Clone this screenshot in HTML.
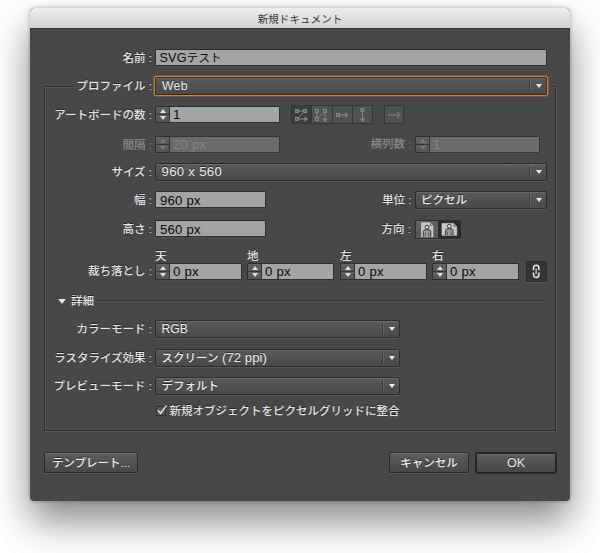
<!DOCTYPE html>
<html lang="ja">
<head>
<meta charset="utf-8">
<title>新規ドキュメント</title>
<style>
html,body{margin:0;padding:0;background:#fff;}
body{width:600px;height:553px;overflow:hidden;position:relative;font-family:"Liberation Sans","Noto Sans CJK JP",sans-serif;font-size:12.2px;color:#e4e4e4;}
.j{font-size:11.5px;font-weight:500;}
#dlg{position:absolute;left:30px;top:8px;width:540px;height:493px;background:#484848;border-radius:5px 5px 4px 4px;box-shadow:0 20px 38px rgba(0,0,0,.47),0 0 4px rgba(0,0,0,.3);}
#title{position:absolute;left:0;top:0;width:540px;height:21px;border-radius:5px 5px 0 0;background:linear-gradient(#eeeeee,#d2d2d2);border-bottom:1px solid #363636;box-sizing:border-box;color:#3a3a3a;text-align:center;line-height:23px;font-size:10.6px;}
.abs{position:absolute;}
.lbl{position:absolute;text-align:right;white-space:nowrap;line-height:16px;height:16px;font-size:11.5px;font-weight:500;text-shadow:0 -1px 0 rgba(0,0,0,.5);}
.dis{color:#8b8b8b;text-shadow:none;}
.fld{position:absolute;box-sizing:border-box;background:#a4a4a4;border:1px solid #303030;border-top-color:#2a2a2a;color:#0a0a0a;font-size:13.2px;letter-spacing:.2px;line-height:15px;padding-left:4px;white-space:nowrap;border-radius:1.5px;box-shadow:0 1px 0 rgba(255,255,255,.03);}
.fld.d{background:#6a6a6a;color:#838383;border-color:#343434;}
.dd{position:absolute;box-sizing:border-box;border:1px solid #2c2c2c;background:linear-gradient(#5a5a5a,#494949);border-radius:2px;color:#ececec;line-height:16px;padding-left:5.5px;white-space:nowrap;box-shadow:0 1px 0 rgba(255,255,255,.09), inset 0 1px 0 rgba(255,255,255,.10);text-shadow:0 -1px 0 rgba(0,0,0,.5);}
.dd i{position:absolute;right:16px;top:2px;bottom:2px;width:1px;background:#3a3a3a;box-shadow:1px 0 0 rgba(255,255,255,.10);}
.dd b{position:absolute;right:4px;top:6px;width:0;height:0;border-left:3.5px solid transparent;border-right:3.5px solid transparent;border-top:4px solid #eaeaea;}
.spin{position:absolute;box-sizing:border-box;width:15px;border:1px solid #303030;border-right:none;background:linear-gradient(#626262 0,#595959 46%,#363636 46%,#363636 54%,#5e5e5e 54%,#545454 100%);border-radius:1.5px 0 0 1.5px;box-shadow:0 1px 0 rgba(255,255,255,.03);}
.spin:before{content:"";position:absolute;left:4px;top:2px;border-left:3px solid transparent;border-right:3px solid transparent;border-bottom:4px solid #dedede;}
.spin:after{content:"";position:absolute;left:4px;bottom:2px;border-left:3px solid transparent;border-right:3px solid transparent;border-top:4px solid #dedede;}
.spin.d:before{border-bottom-color:#787878}.spin.d:after{border-top-color:#787878}
.btn{position:absolute;box-sizing:border-box;border:1px solid #2a2a2a;background:linear-gradient(#5d5d5d,#474747);border-radius:2px;color:#ececec;text-align:center;line-height:19px;padding-top:1px;box-shadow:0 1px 0 rgba(255,255,255,.09), inset 0 1px 0 rgba(255,255,255,.12);text-shadow:0 -1px 0 rgba(0,0,0,.5);}
.ln{position:absolute;background:#2f2f2f;}
.ib{position:absolute;box-sizing:border-box;top:105px;height:19px;border:1px solid #363636;background:#525252;}
svg{position:absolute;left:0;top:0;overflow:visible}
</style>
</head>
<body>
<div id="dlg">
<div id="title">新規ドキュメント</div>
</div>

<!-- fieldset frame -->
<div class="ln" style="left:44px;top:86px;width:30px;height:1px;box-shadow:0 1px 0 rgba(255,255,255,.09)"></div>
<div class="ln" style="left:550px;top:86px;width:6px;height:1px;box-shadow:0 1px 0 rgba(255,255,255,.09)"></div>
<div class="ln" style="left:44px;top:86px;width:1px;height:345px;box-shadow:1px 0 0 rgba(255,255,255,.09)"></div>
<div class="ln" style="left:555px;top:86px;width:1px;height:345px;box-shadow:1px 0 0 rgba(255,255,255,.09)"></div>
<div class="ln" style="left:44px;top:430px;width:512px;height:1px;box-shadow:0 1px 0 rgba(255,255,255,.09)"></div>

<!-- row 1 -->
<div class="lbl" style="left:40px;width:112px;top:50px">名前 :</div>
<div class="fld" style="left:155px;top:49px;width:392px;height:17px;line-height:16px;padding-left:3.5px"><span style="font-size:12.6px">SVG</span><span class="j" style="font-weight:400">テスト</span></div>

<!-- row 2 -->
<div class="lbl" style="left:40px;width:112px;top:78px">プロファイル :</div>
<div class="dd" style="left:154px;top:76px;width:394px;height:20px;border-color:#d8812c;line-height:18px;padding-left:7px;letter-spacing:.3px;box-shadow:0 0 0 .5px rgba(216,129,44,.6),inset 0 0 0 1px #2e2e2e,inset 0 2px 0 rgba(255,255,255,.08)">Web<i style="right:17px;top:3px;bottom:3px"></i><b style="top:7px;right:5px"></b></div>

<!-- row 3 -->
<div class="lbl" style="left:40px;width:112px;top:107px">アートボードの数 :</div>
<div class="spin" style="left:155px;top:106px;height:17px"></div>
<div class="fld" style="left:169px;top:106px;width:111px;height:17px;line-height:16px;padding-left:3px">1</div>

<!-- artboard arrangement icons -->
<div class="ib" style="left:291px;width:21px;background:#3c3c3c"></div>
<div class="ib" style="left:311px;width:22px"></div>
<div class="ib" style="left:332px;width:21px"></div>
<div class="ib" style="left:352px;width:21px"></div>
<div class="ib" style="left:384px;width:20px"></div>
<svg width="600" height="553" viewBox="0 0 600 553" fill="#646464" stroke="#868686" stroke-width="1">
 <!-- icon 1 -->
 <rect x="295.5" y="109.5" width="3" height="3"/><rect x="303.5" y="109.5" width="3" height="3"/><rect x="295.5" y="117.5" width="3" height="3"/>
 <path fill="none" d="M299 111H303M303.500 112.500L298.500 117.500M299 119H307"/><path d="M304.500 116L308 119L304.500 122Z" fill="#868686" stroke="none"/>
 <!-- icon 2 -->
 <rect x="315.500" y="109.500" width="3" height="3"/><rect x="323.500" y="109.500" width="3" height="3"/><rect x="315.500" y="117.500" width="3" height="3"/>
 <path fill="none" d="M317 113V117M318.500 117.500L323.500 112.500M325 113V120"/><path d="M322 118.500L325 122L328 118.500Z" fill="#868686" stroke="none"/>
 <!-- icon 3 -->
 <rect x="336.500" y="113.500" width="3" height="3"/><path d="M340 115H347"/><path d="M345 112L348.500 115L345 118Z" fill="#868686" stroke="none"/>
 <!-- icon 4 -->
 <rect x="361" y="108.500" width="3" height="3"/><path d="M362.500 112V120"/><path d="M359.500 118.500L362.500 122L365.500 118.500Z" fill="#868686" stroke="none"/>
 <!-- arrow -->
 <path d="M388 115H399"/><path fill="none" d="M397 112L400.500 115L397 118" />
</svg>

<!-- row 4 -->
<div class="lbl dis" style="left:40px;width:112px;top:137px">間隔 :</div>
<div class="spin d" style="left:155px;top:136px;height:17px"></div>
<div class="fld d" style="left:169px;top:136px;width:111px;height:17px;line-height:16px;padding-left:3px">20 px</div>
<div class="lbl dis" style="left:299.500px;width:112px;top:136px">横列数 :</div>
<div class="spin d" style="left:415px;top:136px;height:17px"></div>
<div class="fld d" style="left:429px;top:136px;width:111px;height:17px;line-height:16px;padding-left:3px">1</div>

<!-- row 5 -->
<div class="lbl" style="left:40px;width:112px;top:164px">サイズ :</div>
<div class="dd" style="left:155px;top:163px;width:392px;height:18px;font-size:13.2px;letter-spacing:.3px">960 x 560<i></i><b></b></div>

<!-- row 6 -->
<div class="lbl" style="left:40px;width:112px;top:192px">幅 :</div>
<div class="fld" style="left:155px;top:191px;width:111px;height:17px;line-height:16px;padding-top:1px">960 px</div>
<div class="lbl" style="left:299.500px;width:112px;top:192px">単位 :</div>
<div class="dd j" style="left:415px;top:191px;width:132px;height:18px;padding-left:5px">ピクセル<i></i><b></b></div>

<!-- row 7 -->
<div class="lbl" style="left:40px;width:112px;top:221px">高さ :</div>
<div class="fld" style="left:155px;top:220px;width:111px;height:17px;line-height:16px;padding-top:1px">560 px</div>
<div class="lbl" style="left:299px;width:112px;top:221px">方向 :</div>
<div class="abs" style="left:415px;top:220px;width:46px;height:19px;box-sizing:border-box;border:1px solid #2e2e2e;background:#2c2c2c;box-shadow:0 1px 0 rgba(255,255,255,.07)"></div>
<div class="abs" style="left:416px;top:221px;width:22px;height:17px;background:linear-gradient(#646464,#565656)"></div>
<svg width="600" height="553" viewBox="0 0 600 553">
 <!-- portrait -->
 <path d="M421.500 222.800H429.500L433 226.300V236.800H421.500Z" fill="#c6c6c6" stroke="#dedede" stroke-width=".6"/>
 <path d="M429.500 222.800V226.300H433Z" fill="#6e6e6e" stroke="#e0e0e0" stroke-width=".5"/>
 <path d="M423.300 236.800V231.300Q423.300 229.600 427 229.600Q430.700 229.600 430.700 231.300V236.800" fill="#9a9a9a" stroke="#363636" stroke-width="1"/>
 <path d="M425.300 236.800V232.500M428.700 236.800V232.500" stroke="#4a4a4a" stroke-width=".7"/>
 <circle cx="427" cy="227.100" r="1.900" fill="#e4e4e4" stroke="#363636" stroke-width="1"/>
 <!-- landscape -->
 <path d="M442 223.400H453.200L456.700 226.900V235.200H442Z" fill="#c6c6c6" stroke="#dedede" stroke-width=".6"/>
 <path d="M453.200 223.400V226.900H456.700Z" fill="#6e6e6e" stroke="#e0e0e0" stroke-width=".5"/>
 <path d="M445.600 235.200V230.400Q445.600 228.700 449.300 228.700Q453 228.700 453 230.400V235.200" fill="#9a9a9a" stroke="#363636" stroke-width="1"/>
 <path d="M447.600 235.200V231.600M451 235.200V231.600" stroke="#4a4a4a" stroke-width=".7"/>
 <circle cx="449.300" cy="226.200" r="1.900" fill="#e4e4e4" stroke="#363636" stroke-width="1"/>
</svg>

<!-- row 8 -->
<div class="lbl" style="left:155px;top:248px;text-align:left">天</div>
<div class="lbl" style="left:247px;top:248px;text-align:left">地</div>
<div class="lbl" style="left:340px;top:248px;text-align:left">左</div>
<div class="lbl" style="left:432px;top:248px;text-align:left">右</div>
<div class="lbl" style="left:40px;width:112px;top:263px">裁ち落とし :</div>
<div class="spin" style="left:155px;top:263px;height:17px"></div>
<div class="fld" style="left:169px;top:263px;width:73px;height:17px;line-height:16px;padding-left:3px">0 px</div>
<div class="spin" style="left:247px;top:263px;height:17px"></div>
<div class="fld" style="left:261px;top:263px;width:73px;height:17px;line-height:16px;padding-left:3px">0 px</div>
<div class="spin" style="left:340px;top:263px;height:17px"></div>
<div class="fld" style="left:354px;top:263px;width:73px;height:17px;line-height:16px;padding-left:3px">0 px</div>
<div class="spin" style="left:432px;top:263px;height:17px"></div>
<div class="fld" style="left:446px;top:263px;width:73px;height:17px;line-height:16px;padding-left:3px">0 px</div>
<div class="abs" style="left:526px;top:261px;width:21px;height:21px;box-sizing:border-box;border:1px solid #2a2a2a;background:#343434;box-shadow:0 1px 0 rgba(255,255,255,.08)"></div>
<svg width="600" height="553" viewBox="0 0 600 553" fill="none" stroke="#ededed" stroke-width="1.500">
 <path d="M536.200 268.300V274.400" stroke="#a8a8a8" stroke-width="1.700"/>
 <path d="M533.500 270.300V267.900a2.700 2.700 0 0 1 5.400 0V270.300"/>
 <path d="M533.500 272.500V274.800a2.700 2.700 0 0 0 5.400 0V272.500"/>
</svg>

<!-- details -->
<svg width="600" height="553" viewBox="0 0 600 553"><path d="M58.200 299.100H65.800L62 303.900Z" fill="#e8e8e8"/></svg>
<div class="lbl" style="left:71px;top:293px;text-align:left">詳細</div>
<div class="ln" style="left:96px;top:300px;width:451px;height:1px;background:#363636;box-shadow:0 1px 0 rgba(255,255,255,.07)"></div>

<div class="lbl" style="left:40px;width:112px;top:321px">カラーモード :</div>
<div class="dd" style="left:155px;top:320px;width:245px;height:18px">RGB<i></i><b></b></div>
<div class="lbl" style="left:40px;width:112px;top:350px">ラスタライズ効果 :</div>
<div class="dd" style="left:155px;top:349px;width:245px;height:18px"><span class="j">スクリーン</span><span style="font-size:13.2px"> (72 ppi)</span><i></i><b></b></div>
<div class="lbl" style="left:40px;width:112px;top:378px">プレビューモード :</div>
<div class="dd j" style="left:155px;top:377px;width:245px;height:18px">デフォルト<i></i><b></b></div>

<div class="abs" style="left:155.500px;top:406px;width:10.500px;height:10px;box-sizing:border-box;border:1px solid #2c2c2c;background:#565656;border-radius:1px"></div>
<svg width="600" height="553" viewBox="0 0 600 553" fill="none" stroke="#f0f0f0" stroke-width="1.300">
 <path d="M157.800 410.200L160.600 413.500L166.300 405.700"/>
</svg>
<div class="lbl" style="left:169.500px;top:403px;text-align:left">新規オブジェクトをピクセルグリッドに整合</div>

<!-- buttons -->
<div class="btn j" style="left:44px;top:452px;width:94px;height:21px">テンプレート...</div>
<div class="btn j" style="left:389px;top:452px;width:80px;height:21px">キャンセル</div>
<div class="btn" style="left:476px;top:453px;width:80px;height:20px;line-height:17px;border-color:#1e1e1e;box-shadow:0 0 0 1px rgba(34,34,34,.75),inset 0 1px 0 rgba(255,255,255,.12);font-size:12.5px">OK</div>
</body>
</html>
